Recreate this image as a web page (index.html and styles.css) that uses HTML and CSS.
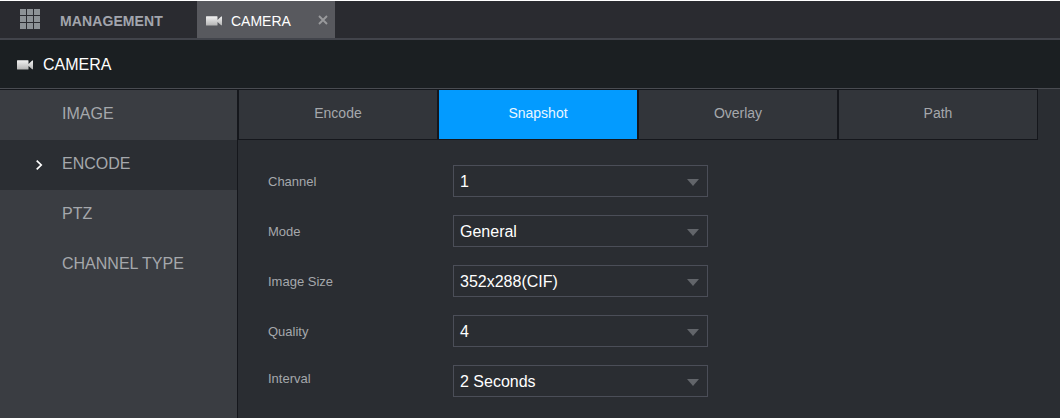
FILE: index.html
```html
<!DOCTYPE html>
<html lang="en">
<head>
<meta charset="utf-8">
<title>Camera</title>
<link rel="stylesheet" href="styles.css">
</head>
<body>
<svg width="0" height="0" class="defs"><defs>
<linearGradient id="metal" x1="0" y1="0" x2="0" y2="1"><stop offset="0" stop-color="#f2f2f2"/><stop offset="1" stop-color="#b4b4b4"/></linearGradient>
<symbol id="cam" viewBox="0 0 16 10"><path fill="url(#metal)" d="M0 .8Q0 .3 .5 .3H11Q11.5 .3 11.5 .8V4L15.2 .5H16V9.3H15.2L11.5 6V9Q11.5 9.5 11 9.5H.5Q0 9.5 0 9Z"/></symbol>
</defs></svg>
<header class="topbar">
  <svg class="grid" width="20" height="20" viewBox="0 0 20 20" fill="#8d9296"><path d="M0 0h6v6H0zM7 0h6v6H7zM14 0h6v6h-6zM0 7h6v6H0zM7 7h6v6H7zM14 7h6v6h-6zM0 14h6v6H0zM7 14h6v6H7zM14 14h6v6h-6z"/></svg>
  <span class="management">MANAGEMENT</span>
  <div class="window-tab">
    <svg class="cam" width="16" height="10"><use href="#cam"/></svg>
    <span class="window-name">CAMERA</span>
    <svg class="close" width="10" height="10" viewBox="0 0 10 10"><path d="M1 1L9 9M9 1L1 9" stroke="#999a9c" stroke-width="1.9"/></svg>
  </div>
</header>
<div class="titlebar">
  <svg class="cam" width="16" height="10"><use href="#cam"/></svg>
  <h1>CAMERA</h1>
</div>
<div class="main">
  <nav class="side">
    <a class="item">IMAGE</a>
    <a class="item current"><svg class="chevron" width="7" height="10" viewBox="0 0 7 10"><path d="M.7.7L5.2 5L.7 9.3" fill="none" stroke="#fff" stroke-width="1.7"/></svg>ENCODE</a>
    <a class="item">PTZ</a>
    <a class="item">CHANNEL TYPE</a>
  </nav>
  <section class="content">
    <div class="tabs">
      <div class="tab">Encode</div>
      <div class="tab active">Snapshot</div>
      <div class="tab">Overlay</div>
      <div class="tab">Path</div>
    </div>
    <div class="form">
      <div class="row"><span class="label">Channel</span><div class="select">1<i class="arrow"></i></div></div>
      <div class="row"><span class="label">Mode</span><div class="select">General<i class="arrow"></i></div></div>
      <div class="row"><span class="label">Image Size</span><div class="select">352x288(CIF)<i class="arrow"></i></div></div>
      <div class="row"><span class="label">Quality</span><div class="select">4<i class="arrow"></i></div></div>
      <div class="row last"><span class="label">Interval</span><div class="select">2 Seconds<i class="arrow"></i></div></div>
    </div>
  </section>
</div>
</body>
</html>
```
FILE: styles.css
```css
* { box-sizing: border-box; }
body {
  margin: 0;
  height: 418px;
  display: flex;
  flex-direction: column;
  overflow: hidden;
  background: #2a2d32;
  font-family: "Liberation Sans", Arial, sans-serif;
  color: #a5a8ac;
}
.defs { position: absolute; }
.topbar {
  height: 40px;
  flex: none;
  display: flex;
  border-top: 1px solid #fff;
  border-bottom: 2px solid #42444b;
  background: #2a2b30;
}
.grid { margin: 8px 0 0 20px; }
.management {
  width: 137px;
  margin-left: 20px;
  font-size: 14px;
  font-weight: bold;
  letter-spacing: 0.1px;
  line-height: 40px;
  color: #a2a5ad;
}
.window-tab {
  width: 138px;
  display: flex;
  background: #58595e;
}
.window-tab .cam { margin: 15px 0 0 9px; }
.window-name {
  width: 87px;
  margin-left: 9px;
  font-size: 14px;
  line-height: 40px;
  color: #fff;
}
.close { margin-top: 14px; }
.titlebar {
  height: 49px;
  flex: none;
  display: flex;
  background: #1b1f22;
  border-bottom: 1px solid #494b51;
}
.titlebar .cam { margin: 20px 0 0 17px; }
.titlebar h1 {
  margin: 0 0 0 10px;
  font-size: 16px;
  font-weight: normal;
  line-height: 50px;
  height: 48px;
  color: #fff;
}
.main { flex: 1; display: flex; }
.side {
  width: 238px;
  background: #3a3d42;
  border-top: 1px solid #15171c;
  border-right: 1px solid #15171c;
}
.item {
  display: block;
  height: 50px;
  padding-left: 62px;
  font-size: 16px;
  line-height: 47px;
}
.current { background: #2b2e33; }
.chevron {
  float: left;
  margin: 20px 0 0 -26px;
}
.content { flex: 1; background: #2a2d32; }
.tabs { display: flex; }
.tab {
  width: 200px;
  height: 51px;
  border: 1px solid #15171c;
  background: #32353a;
  font-size: 14px;
  line-height: 47px;
  text-align: center;
}
.active { background: #039bff; color: #eaf6ff; }
.form { padding: 25px 0 0 30px; }
.row { display: flex; height: 50px; }
.label {
  width: 185px;
  font-size: 13px;
  line-height: 33px;
}
.last .label { line-height: 27px; }
.select {
  width: 255px;
  height: 32px;
  display: flex;
  justify-content: space-between;
  align-items: center;
  padding: 1px 8px 0 6px;
  border: 1px solid #4b4e58;
  color: #fff;
  font-size: 16px;
}
.arrow {
  border: 6px solid transparent;
  border-top: 7px solid #62656a;
  border-bottom: 0;
  margin-top: 2px;
}
```
